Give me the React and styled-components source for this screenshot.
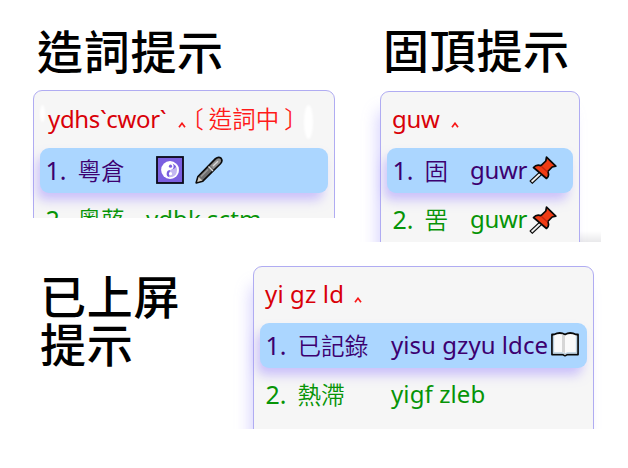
import React from "react";
import styled, { createGlobalStyle } from "styled-components";

const Global = createGlobalStyle`
  *, *::before, *::after { box-sizing: border-box; }
  body { margin: 0; background: #fff; }
`;

const latin = `"Noto Sans", "Noto Sans CJK TC", sans-serif`;
const cjk = `"Noto Sans CJK TC", sans-serif`;

const Page = styled.main`
  width: 628px;
  height: 468px;
  overflow: hidden;
  background: #fff;
  display: flex;
  flex-direction: column;
  font-family: ${latin};
`;

const TopBand = styled.div`
  display: grid;
  grid-template-columns: 359px 1fr;
  height: 242px;
`;

const BottomBand = styled.div`
  display: grid;
  grid-template-columns: 232px 1fr;
  height: 187px;
`;

const Column = styled.section`
  display: flex;
  flex-direction: column;
  min-width: 0;
`;

const Title = styled.h2`
  margin: 0;
  padding: ${(p) => p.$pad};
  height: ${(p) => p.$height}px;
  font: 500 46px/48px ${cjk};
  letter-spacing: 0.7px;
  color: #000;
  white-space: nowrap;
`;

const Capture = styled.div`
  width: ${(p) => p.$width}px;
  height: ${(p) => p.$height}px;
  margin-left: ${(p) => p.$left ?? 0}px;
  padding: ${(p) => p.$pad};
  overflow: hidden;
  background: ${(p) => (p.$shade ? "linear-gradient(#fff, #e9e9eb) right bottom / 22px 11px no-repeat" : "none")};
`;

const Panel = styled.div`
  position: relative;
  width: ${(p) => p.$width}px;
  height: 240px;
  padding: 0 6px;
  border: 1px solid #b0acf2;
  border-radius: 9px;
  background: #f6f6f6;
  box-shadow: ${(p) => (p.$flat ? "none" : "-6px 16px 16px -4px rgba(150, 140, 250, 0.4)")};
`;

const Smudge = styled.span`
  position: absolute;
  left: ${(p) => p.$x}px;
  top: ${(p) => p.$y}px;
  width: ${(p) => p.$w}px;
  height: ${(p) => p.$h}px;
  border-radius: 50%;
  background: #fff;
  filter: blur(1px);
`;

const Preedit = styled.div`
  display: flex;
  align-items: center;
  height: ${(p) => p.$height ?? 56}px;
  padding: 0 0 2px ${(p) => p.$inset ?? 5}px;
  color: #d90008;
  font-size: 24px;
  line-height: 54px;
  white-space: pre;
`;

const Run = styled.span`
  letter-spacing: ${(p) => p.$track ?? -0.35}px;
`;

const Caret = styled.svg`
  width: 8px;
  height: 6px;
  margin: 12px 0 0 ${(p) => p.$gap}px;
  fill: none;
  stroke: #f81818;
  stroke-width: 1.7;
`;

const Status = styled.span`
  display: flex;
  gap: 5px;
  margin-left: -6px;
  padding-bottom: 1px;
  font-family: ${cjk};
  font-size: 23.5px;
  font-weight: 350;
  color: #ff1a1a;
`;

const Row = styled.div`
  display: grid;
  grid-template-columns: 32px ${(p) => p.$wordWidth}px 1fr;
  align-items: center;
  height: 45px;
  margin-bottom: 4px;
  padding: 0 0 ${(p) => (p.$active ? 2 : 1)}px 5.5px;
  border-radius: 9px;
  color: ${(p) => (p.$active ? "#3c0070" : "#079407")};
  background: ${(p) => (p.$active ? "#abd6ff" : "transparent")};
  box-shadow: ${(p) => (p.$active ? "-4px 8px 11px -1px rgba(160, 140, 255, 0.5)" : "none")};
  font-size: 24px;
  line-height: 42px;
  white-space: pre;
`;

const Index = styled.span`
  font-size: 25px;
`;

const Word = styled.span`
  font-family: ${cjk};
  font-size: 23.6px;
  font-weight: 350;
`;

const Code = styled.span`
  display: flex;
  align-items: center;
  letter-spacing: ${(p) => p.$track ?? -0.35}px;
`;

const Glyph = styled.svg`
  flex: none;
  width: 28px;
  height: 28px;
  margin: 1px 0 0 ${(p) => p.$gap ?? 0}px;
`;

const Yin = () => (
  <Glyph viewBox="0 0 28 28" $gap={0.5}>
    <rect x="1" y="1" width="26" height="26" fill="#7b5fe0" stroke="#080818" strokeWidth="1.8" />
    <circle cx="14" cy="14" r="8.9" fill="#fff" />
    <path d="M14.500 6.700a3.700 3.700 0 0 1 0 7.300 3.700 3.700 0 0 0-1 7.300q7.500.2 7.500-7.300 0-5.500-6.500-7.300Z" fill="#7b5fe0" />
    <path d="M14 14c5-1 7-3 6.500-6.500 4 4.500 3 11-1 13.500-2.500 1.800-6 1.500-6.500 0Z" fill="#fff" opacity=".55" />
    <circle cx="14.500" cy="10.200" r="1.600" fill="#7b5fe0" />
    <circle cx="14.500" cy="17.700" r="1.600" fill="#fff" />
  </Glyph>
);

const Pen = () => (
  <Glyph viewBox="0 0 28 28" $gap={11}>
    <path d="M1.200 26.800 3 20.500 20.500 2.600Q23.500.2 26 2.200 28 4.800 25.600 7.500L7.800 25.200Z" fill="#6d6d6d" stroke="#0a0a0a" strokeWidth="1.700" strokeLinejoin="round" />
    <path d="m3.600 21 3.900 3.600L2.200 26Z" fill="#d3ccc0" />
    <path d="m15.500 9.500 7-6.500q2-1 3 .5t-.5 3.500L18.500 13Z" fill="#929292" />
    <path d="m18 10 5-4.800" stroke="#d8d8d8" strokeWidth="1.300" />
    <path d="m13.500 10.500 4.500 4.500" stroke="#dcdcdc" strokeWidth="1.300" />
    <path d="m6 20.500 7-7" stroke="#999" strokeWidth="1.400" />
  </Glyph>
);

const Pin = () => (
  <Glyph viewBox="0 0 28 28" $gap={2.5}>
    <path d="M12 17 1.800 26.500" stroke="#080808" strokeWidth="4.400" />
    <path d="M12 17 2.600 25.800" stroke="#eee" strokeWidth="1.900" />
    <path d="m17.500 1.200 9.300 9-3.600.8-4.400 4.500q2 4.700-1.300 7L4.500 11.500q3-3.500 7.500-1.800l4.800-4.700Z" fill="#f03c14" stroke="#080808" strokeWidth="1.700" strokeLinejoin="round" />
    <path d="m12.500 10.500 6 5.500" stroke="#c9240f" strokeWidth="1.300" />
  </Glyph>
);

const Book = () => (
  <Glyph viewBox="0 0 28 28" $gap={2.5}>
    <path d="M1 3.500h2q6-3 11 0 5-3 11 0h2V23.500H16.500L14 24.700 11.500 23.500H1Z" fill="#fafafa" stroke="#0a0a0a" strokeWidth="1.800" strokeLinejoin="round" />
    <path d="M2.500 5v17h9l2.500 1 2.500-1h9V5" fill="none" stroke="#b9cfdf" strokeWidth="1.300" />
    <path d="M11 3.500q2 .3 3 1.500v17.500q-1-1.500-3-1.500Z" fill="#d6d6d6" />
  </Glyph>
);

const Mark = ({ gap }) => (
  <Caret viewBox="0 0 8 6" $gap={gap}>
    <path d="m1 5.300 3-4 3 4" />
  </Caret>
);

const Candidate = ({ n, word, code, active, wordWidth, track, children }) => (
  <Row $active={active} $wordWidth={wordWidth}>
    <Index>{n}.</Index>
    <Word>{word}</Word>
    <Code $track={track}>{code}{children}</Code>
  </Row>
);

export default function App() {
  return (
    <Page>
      <Global />
      <TopBand>
        <Column>
          <Title $height={90} $pad="25px 0 0 37px">造詞提示</Title>
          <Capture $width={329} $height={128} $left={30} $pad="0 0 0 3px">
            <Panel $width={302} $flat>
              <Smudge $x={6} $y={14} $w={5} $h={17} />
              <Smudge $x={270} $y={14} $w={9} $h={34} />
              <Preedit $inset={8} $height={57}>
                <Run>ydhs`cwor`</Run><Mark gap={12} />
                <Status><span>〔</span><span>造詞中</span><span>〕</span></Status>
              </Preedit>
              <Candidate n={1} word="粵倉" active wordWidth={77.5}><Yin /><Pen /></Candidate>
              <Candidate n={2} word="粵蕗" code="ydbk sctm" wordWidth={68.5} track={0.05} />
            </Panel>
          </Capture>
        </Column>
        <Column>
          <Title $height={91} $pad="24px 0 0 24px">固頂提示</Title>
          <Capture $width={242} $height={151} $pad="0 0 0 21px" $shade>
            <Panel $width={200}>
              <Preedit><Run>guw</Run><Mark gap={12} /></Preedit>
              <Candidate n={1} word="固" code="guwr" active wordWidth={45.5}><Pin /></Candidate>
              <Candidate n={2} word="罟" code="guwr" wordWidth={45.5}><Pin /></Candidate>
            </Panel>
          </Capture>
        </Column>
      </TopBand>
      <BottomBand>
        <Title $height={187} $pad="28px 0 0 40px">已上屏<br />提示</Title>
        <Capture $width={396} $height={187} $pad="24px 0 0 21px">
          <Panel $width={341}>
            <Preedit><Run $track={0.15}>yi gz ld</Run><Mark gap={10} /></Preedit>
            <Candidate n={1} word="已記錄" code="yisu gzyu ldce" active wordWidth={93.5} track={0.05}><Book /></Candidate>
            <Candidate n={2} word="熱滯" code="yigf zleb" wordWidth={93.5} track={0.1} />
          </Panel>
        </Capture>
      </BottomBand>
    </Page>
  );
}
